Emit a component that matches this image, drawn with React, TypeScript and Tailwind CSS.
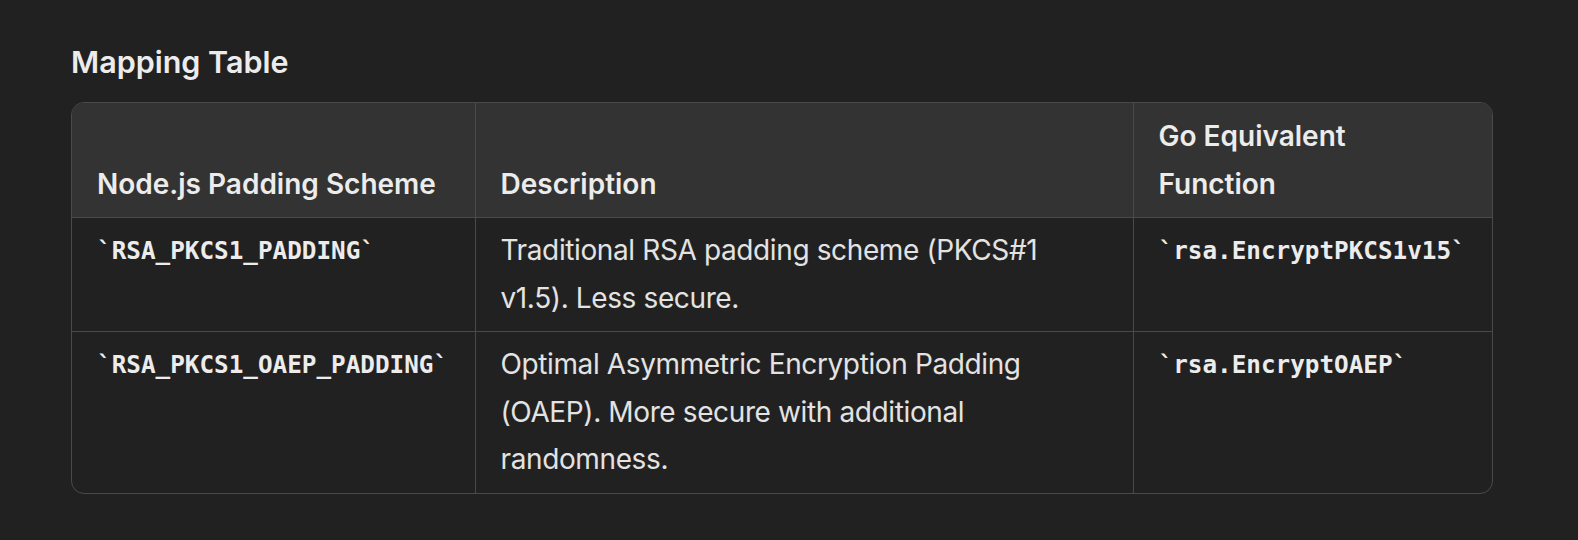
const rows = [
  {
    scheme: '`RSA_PKCS1_PADDING`',
    description: 'Traditional RSA padding scheme (PKCS#1 v1.5). Less secure.',
    go: '`rsa.EncryptPKCS1v15`',
  },
  {
    scheme: '`RSA_PKCS1_OAEP_PADDING`',
    description: 'Optimal Asymmetric Encryption Padding (OAEP). More secure with additional randomness.',
    go: '`rsa.EncryptOAEP`',
  },
];

const mono = "font-['DejaVu_Sans_Mono',Menlo,monospace] text-[24.3px] font-bold";

export default function App() {
  return (
    <div className="min-h-[540px] w-full bg-[#212121] px-[71px] pt-[40px] font-['Inter','Noto_Sans',sans-serif] text-[#ececec]">
      <h3 className="text-[30.5px] font-semibold leading-[44px]">Mapping Table</h3>
      <div className="mt-[18px] w-[1422px] overflow-hidden rounded-[13px] border border-[#4a4a4a]">
        <table className="w-full table-fixed border-collapse text-left">
          <colgroup>
            <col className="w-[403px]" />
            <col className="w-[658px]" />
            <col />
          </colgroup>
          <thead className="bg-[#333333]">
            <tr>
              <th className="px-[25px] py-[9px] align-bottom text-[28px] font-semibold leading-[48px]">
                Node.js Padding Scheme
              </th>
              <th className="border-l border-[#4a4a4a] px-[25px] py-[9px] align-bottom text-[28px] font-semibold leading-[48px]">
                Description
              </th>
              <th className="border-l border-[#4a4a4a] px-[25px] py-[9px] align-bottom text-[28px] font-semibold leading-[48px]">
                Go Equivalent Function
              </th>
            </tr>
          </thead>
          <tbody>
            {rows.map((r) => (
              <tr key={r.scheme} className="border-t border-[#4a4a4a]">
                <td className="px-[25px] py-[9px] align-top leading-[47.5px]">
                  <span className={mono}>{r.scheme}</span>
                </td>
                <td className="border-l border-[#4a4a4a] px-[25px] py-[9px] align-top text-[28px] leading-[47.5px] tracking-[-0.38px] text-[#e3e3e3]">
                  {r.description}
                </td>
                <td className="border-l border-[#4a4a4a] px-[25px] py-[9px] align-top leading-[47.5px]">
                  <span className={mono}>{r.go}</span>
                </td>
              </tr>
            ))}
          </tbody>
        </table>
      </div>
    </div>
  );
}
